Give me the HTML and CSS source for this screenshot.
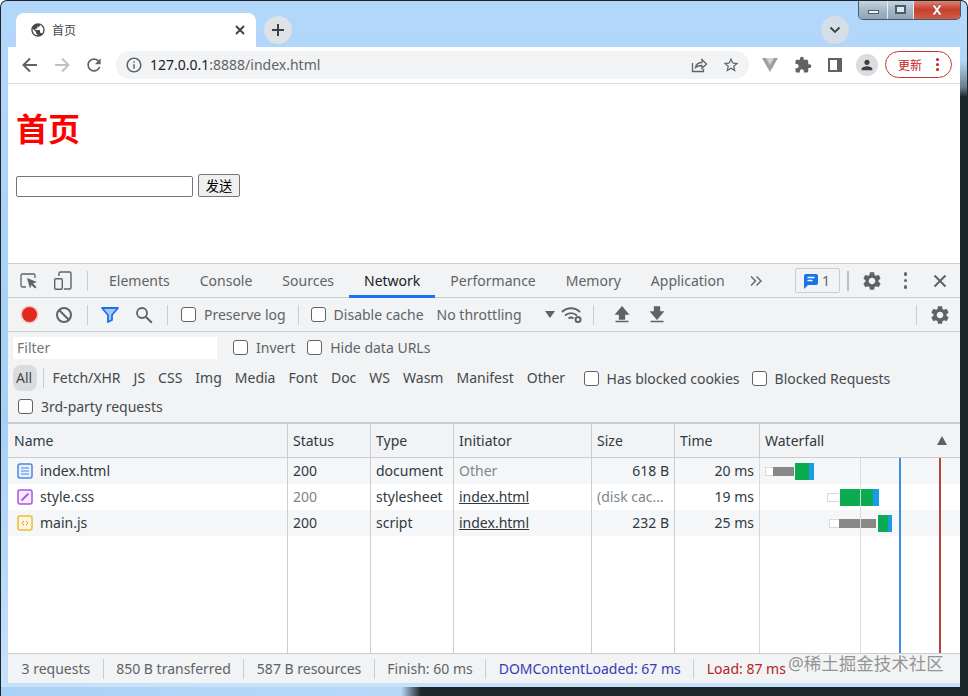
FILE: index.html
```html
<!DOCTYPE html>
<html lang="zh-CN">
<head>
<meta charset="utf-8">
<title>首页</title>
<link rel="stylesheet" href="styles.css">
</head>
<body>
<div class="window">
  <div class="winctl">
    <span class="wc wc-min"><i></i></span>
    <span class="wc wc-max"><i></i></span>
    <span class="wc wc-close"><svg width="18" height="12" viewBox="0 0 18 12"><path d="M4 1h3l2 3 2-3h3l-3.500 5L14 11h-3L9 8l-2 3H4l3.500-5z" fill="#fff" stroke="#8b3a30" stroke-width=".5"/></svg></span>
  </div>
  <header class="tabstrip">
    <div class="tab">
      <svg class="ic16" viewBox="0 0 24 24"><path fill="#45494d" d="M12 2C6.480 2 2 6.480 2 12s4.480 10 10 10 10-4.480 10-10S17.520 2 12 2zm-1 17.930c-3.950-.490-7-3.850-7-7.930 0-.620.080-1.210.210-1.790L9 15v1c0 1.100.900 2 2 2v1.930zm6.900-2.540c-.260-.810-1-1.390-1.900-1.390h-1v-3c0-.550-.450-1-1-1H8v-2h2c.550 0 1-.450 1-1V7h2c1.100 0 2-.900 2-2v-.410c2.930 1.190 5 4.060 5 7.410 0 2.080-.800 3.970-2.100 5.390z"/></svg>
      <span class="tab-title">首页</span>
      <svg class="tab-x" width="10" height="10" viewBox="0 0 10 10"><path d="M1 1l8 8M9 1l-8 8" stroke="#3c4043" stroke-width="1.800" fill="none"/></svg>
    </div>
    <div class="newtab"><svg width="14" height="14" viewBox="0 0 14 14"><path d="M7 1v12M1 7h12" stroke="#3c4043" stroke-width="2" fill="none"/></svg></div>
    <div class="tabsearch"><svg width="12" height="8" viewBox="0 0 12 8"><path d="M1.500 1.500L6 6l4.500-4.500" stroke="#3c4043" stroke-width="1.800" fill="none"/></svg></div>
  </header>
  <main class="content">
    <nav class="toolbar">
      <span class="tbtn"><svg width="18" height="18" viewBox="0 0 18 18"><path d="M16 9H3M9 2.500L2.500 9 9 15.500" stroke="#5f6368" stroke-width="2" fill="none"/></svg></span>
      <span class="tbtn"><svg width="18" height="18" viewBox="0 0 18 18"><path d="M2 9h13M9 2.500L15.500 9 9 15.500" stroke="#bdc1c6" stroke-width="2" fill="none"/></svg></span>
      <span class="tbtn"><svg width="20" height="20" viewBox="0 0 24 24"><path fill="#5f6368" d="M17.650 6.350C16.200 4.900 14.210 4 12 4c-4.420 0-7.990 3.580-7.990 8s3.570 8 7.990 8c3.730 0 6.840-2.550 7.730-6h-2.080c-.820 2.330-3.040 4-5.650 4-3.310 0-6-2.690-6-6s2.690-6 6-6c1.660 0 3.140.690 4.220 1.780L13 11h7V4l-2.350 2.350z"/></svg></span>
      <div class="omnibox">
        <svg class="omni-info" width="18" height="18" viewBox="0 0 24 24"><path fill="#5f6368" d="M11 7h2v2h-2zm0 4h2v6h-2zm1-9C6.480 2 2 6.480 2 12s4.480 10 10 10 10-4.480 10-10S17.520 2 12 2zm0 18c-4.410 0-8-3.590-8-8s3.590-8 8-8 8 3.590 8 8-3.590 8-8 8z"/></svg>
        <span class="url"><b>127.0.0.1</b>:8888/index.html</span>
        <span class="tbtn share"><svg width="18" height="18" viewBox="0 0 18 18"><path d="M2.500 7v8.500h11V13M5.500 11.500c.6-3.200 3-5 6.500-5V3.500l4.500 4.500L12 12.500V9.500c-2.700 0-4.800.5-6.500 2z" stroke="#5f6368" stroke-width="1.300" fill="none"/></svg></span>
        <span class="tbtn"><svg width="18" height="18" viewBox="0 0 24 24"><path fill="#5f6368" d="M22 9.240l-7.190-.620L12 2 9.190 8.630 2 9.240l5.460 4.730L5.820 21 12 17.270 18.180 21l-1.630-7.030L22 9.240zM12 15.400l-3.760 2.270 1-4.280-3.320-2.880 4.380-.380L12 6.100l1.710 4.040 4.380.380-3.320 2.880 1 4.280L12 15.400z"/></svg></span>
      </div>
      <span class="tbtn first-ext"><svg width="16" height="14" viewBox="0 0 16 14"><path d="M0 0h16L8 14z" fill="#9aa0a6"/><path d="M4 0h8L8 7z" fill="#d0d3d6"/></svg></span>
      <span class="tbtn gap1"><svg width="18" height="18" viewBox="0 0 24 24"><path fill="#5f6368" d="M20.500 11H19V7c0-1.100-.900-2-2-2h-4V3.500C13 2.120 11.880 1 10.500 1S8 2.120 8 3.500V5H4c-1.100 0-1.990.900-1.990 2v3.800H3.500c1.490 0 2.700 1.210 2.700 2.700s-1.210 2.700-2.700 2.700H2V20c0 1.100.900 2 2 2h3.800v-1.500c0-1.490 1.210-2.700 2.700-2.700 1.490 0 2.700 1.210 2.700 2.700V22H17c1.100 0 2-.900 2-2v-4h1.500c1.380 0 2.500-1.120 2.500-2.500S21.880 11 20.500 11z"/></svg></span>
      <span class="tbtn"><svg width="14" height="14" viewBox="0 0 14 14"><path d="M0 0h14v14H0z" fill="#5f6368"/><path d="M2 2h7v10H2z" fill="#fff"/></svg></span>
      <span class="tbtn"><span class="avatar"><svg width="16" height="16" viewBox="0 0 24 24"><path fill="#3c4043" d="M12 12c2.210 0 4-1.790 4-4s-1.790-4-4-4-4 1.790-4 4 1.790 4 4 4zm0 2c-2.670 0-8 1.340-8 4v2h16v-2c0-2.660-5.330-4-8-4z"/></svg></span></span>
      <div class="update"><span>更新</span><i class="updots"><em></em><em></em><em></em></i></div>
    </nav>
    <section class="page">
      <h1 class="page-title">首页</h1>
      <form class="page-form"><input class="page-input" type="text"> <button class="page-send" type="button">发送</button></form>
    </section>
    <section class="devtools">
      <div class="dt-tabs">
        <span class="dbtn"><svg width="18" height="18" viewBox="0 0 18 18"><path d="M6 15H2.500A1.500 1.500 0 0 1 1 13.500v-10A1.500 1.500 0 0 1 2.500 2h11A1.500 1.500 0 0 1 15 3.500V6" stroke="#5f6368" stroke-width="1.300" fill="none"/><path d="M7 6l10 4-4 1.500 3.500 3.500-1.500 1.500L11.500 13 10 16.500z" fill="#5f6368"/></svg></span>
        <span class="dbtn"><svg width="20" height="20" viewBox="0 0 20 20"><path d="M6 5V2.500A1.500 1.500 0 0 1 7.500 1h9A1.500 1.500 0 0 1 18 2.500v14a1.500 1.500 0 0 1-1.500 1.500H11" stroke="#5f6368" stroke-width="1.400" fill="none"/><rect x="1.700" y="7.700" width="7.600" height="10.600" rx="1.200" stroke="#5f6368" stroke-width="1.400" fill="none"/></svg></span>
        <i class="vsep vsep-tabs"></i>
        <span class="dtab">Elements</span><span class="dtab">Console</span><span class="dtab">Sources</span><span class="dtab active">Network</span><span class="dtab">Performance</span><span class="dtab">Memory</span><span class="dtab">Application</span>
        <svg class="more" width="14" height="12" viewBox="0 0 14 12"><path d="M2 1.500L6.500 6 2 10.500M7.500 1.500L12 6l-4.500 4.500" stroke="#5f6368" stroke-width="1.400" fill="none"/></svg>
        <span class="badge"><svg width="14" height="16" viewBox="0 0 14 16"><path d="M2 1h10a2 2 0 0 1 2 2v7a2 2 0 0 1-2 2H4l-4 4V3a2 2 0 0 1 2-2z" fill="#1a73e8"/><path d="M3.500 4.500h7M3.500 7.500h5" stroke="#fff" stroke-width="1.300"/></svg>1</span>
        <i class="vsep vsep-badge"></i>
        <span class="dbtn gear"><svg width="22" height="22" viewBox="0 0 24 24"><use href="#gear"/></svg></span>
        <span class="dbtn"><i class="dots"><em></em><em></em><em></em></i></span>
        <span class="dbtn"><svg width="14" height="14" viewBox="0 0 14 14"><path d="M1.500 1.500l11 11M12.500 1.500l-11 11" stroke="#5f6368" stroke-width="2" fill="none"/></svg></span>
      </div>
      <div class="dt-bar">
        <span class="dbtn"><i class="rec"></i></span>
        <span class="dbtn clear"><svg width="18" height="18" viewBox="0 0 18 18"><circle cx="9" cy="9" r="7" stroke="#5f6368" stroke-width="2" fill="none"/><path d="M4 4l10 10" stroke="#5f6368" stroke-width="2"/></svg></span>
        <i class="vsep vsep-rec"></i>
        <span class="dbtn"><svg width="18" height="16" viewBox="0 0 18 16"><path d="M1 1h16l-6 7v5l-4 2V8z" fill="#a8c7fa" stroke="#1a73e8" stroke-width="1.800" stroke-linejoin="round"/></svg></span>
        <span class="dbtn search"><svg width="18" height="18" viewBox="0 0 18 18"><circle cx="7" cy="7" r="5" stroke="#5f6368" stroke-width="1.800" fill="none"/><path d="M10.800 10.800l6 6" stroke="#5f6368" stroke-width="2"/></svg></span>
        <i class="vsep vsep-search"></i>
        <label class="check c-preserve"><input type="checkbox">Preserve log</label>
        <i class="vsep vsep-preserve"></i>
        <label class="check c-cache"><input type="checkbox">Disable cache</label>
        <span class="throttle">No throttling<i class="caret"></i></span>
        <span class="wifi"><svg width="22" height="18" viewBox="0 0 22 18"><path d="M1 6c5-5 13-5 18 0M4 9.500c3.400-3.200 8.600-3.200 12 0M7.500 12.500c1.500-1.200 3.500-1.200 5 0" stroke="#5f6368" stroke-width="1.800" fill="none"/><circle cx="17" cy="13.500" r="2.500" fill="none" stroke="#5f6368" stroke-width="2"/></svg></span>
        <i class="vsep vsep-wifi"></i>
        <span class="dbtn imp"><svg width="16" height="17" viewBox="0 0 16 17"><path d="M8 1l6 7h-3.500v5h-5V8H2zM1.500 15.500h13" fill="#5f6368" stroke="#5f6368" stroke-width="1.300"/></svg></span>
        <span class="dbtn exp"><svg width="16" height="17" viewBox="0 0 16 17"><path d="M8 13L2 6h3.500V1h5v5H14zM1.500 15.500h13" fill="#5f6368" stroke="#5f6368" stroke-width="1.300"/></svg></span>
        <i class="vsep vsep-end"></i>
        <span class="dbtn gear2"><svg width="22" height="22" viewBox="0 0 24 24"><use href="#gear"/></svg></span>
      </div>
      <div class="f-row f-row1">
        <input class="filter" type="text" placeholder="Filter">
        <label class="check c-invert"><input type="checkbox">Invert</label>
        <label class="check c-hide"><input type="checkbox">Hide data URLs</label>
      </div>
      <div class="f-row f-row2">
        <span class="chip on">All</span><i class="vsep vsep-chip"></i>
        <span class="chip">Fetch/XHR</span><span class="chip">JS</span><span class="chip">CSS</span><span class="chip">Img</span><span class="chip">Media</span><span class="chip">Font</span><span class="chip">Doc</span><span class="chip">WS</span><span class="chip">Wasm</span><span class="chip">Manifest</span><span class="chip">Other</span>
        <label class="check c-cookies"><input type="checkbox">Has blocked cookies</label>
        <label class="check c-blocked"><input type="checkbox">Blocked Requests</label>
      </div>
      <div class="f-row f-row3">
        <label class="check c-third"><input type="checkbox">3rd-party requests</label>
      </div>
      <div class="net">
        <div class="th">Name</div><div class="th">Status</div><div class="th">Type</div><div class="th">Initiator</div><div class="th">Size</div><div class="th">Time</div><div class="th th-wf">Waterfall<i class="sort"></i></div>

        <div class="td alt name"><svg class="fi" width="16" height="16" viewBox="0 0 16 16"><rect x="1" y="1" width="14" height="14" rx="2" fill="#e8f0fe" stroke="#4f86e0" stroke-width="1.500"/><path d="M4 5h8M4 8h8M4 11h8" stroke="#4f86e0" stroke-width="1.200"/></svg>index.html</div>
        <div class="td alt">200</div><div class="td alt">document</div><div class="td alt dim">Other</div><div class="td alt num">618 B</div><div class="td alt num">20 ms</div>
        <div class="wf">
          <div class="wf-row alt"><i class="b-wait" style="margin-left:5px;width:8px"></i><i class="b-gray" style="width:21px"></i><i class="b-green" style="margin-left:1px;width:14px"></i><i class="b-blue" style="width:5px"></i></div>
          <div class="wf-row"><i class="b-wait" style="margin-left:67px;width:12px"></i><i class="b-green" style="margin-left:1px;width:33px"></i><i class="b-blue" style="width:6px"></i></div>
          <div class="wf-row alt"><i class="b-wait" style="margin-left:69px;width:10px"></i><i class="b-gray" style="width:37px"></i><i class="b-green" style="margin-left:2px;width:10px"></i><i class="b-blue" style="width:4px"></i></div>
          <i class="wl wl-gray"></i><i class="wl wl-blue"></i><i class="wl wl-red"></i>
        </div>

        <div class="td name"><svg class="fi" width="16" height="16" viewBox="0 0 16 16"><rect x="1" y="1" width="14" height="14" rx="2" fill="#f6edfd" stroke="#a855e8" stroke-width="1.500"/><path d="M4.500 11.500l7-7" stroke="#a855e8" stroke-width="1.800"/></svg>style.css</div>
        <div class="td dim">200</div><div class="td">stylesheet</div><div class="td"><u>index.html</u></div><div class="td dim ell">(disk cache)</div><div class="td num">19 ms</div>

        <div class="td alt name"><svg class="fi" width="16" height="16" viewBox="0 0 16 16"><rect x="1" y="1" width="14" height="14" rx="2" fill="#fff8e1" stroke="#eebb33" stroke-width="1.500"/><path d="M7 6L5 8l2 2M9 6l2 2-2 2" stroke="#e0a000" stroke-width="1" fill="none"/></svg>main.js</div>
        <div class="td alt">200</div><div class="td alt">script</div><div class="td alt"><u>index.html</u></div><div class="td alt num">232 B</div><div class="td alt num">25 ms</div>

        <div class="td fill"></div><div class="td fill"></div><div class="td fill"></div><div class="td fill"></div><div class="td fill"></div><div class="td fill"></div>
      </div>
      <footer class="status">
        <span class="st">3 requests</span><span class="st">850 B transferred</span><span class="st">587 B resources</span><span class="st">Finish: 60 ms</span><span class="st st-blue">DOMContentLoaded: 67 ms</span><span class="st st-red">Load: 87 ms</span>
      </footer>
    </section>
    <div class="watermark">@稀土掘金技术社区</div>
  </main>
</div>
<svg class="defs" width="0" height="0"><defs><path id="gear" fill="#5f6368" d="M19.140 12.940c.040-.300.060-.610.060-.940 0-.320-.020-.640-.070-.940l2.030-1.580c.180-.140.230-.410.120-.610l-1.920-3.320c-.120-.220-.370-.290-.590-.220l-2.390.960c-.500-.380-1.030-.700-1.620-.940l-.360-2.540c-.040-.240-.240-.410-.480-.410h-3.840c-.240 0-.430.170-.470.410l-.360 2.540c-.590.240-1.130.570-1.620.940l-2.390-.960c-.220-.080-.470 0-.590.220L2.740 8.870c-.120.210-.080.470.120.610l2.030 1.580c-.050.300-.090.630-.090.940s.020.640.070.940l-2.030 1.580c-.180.140-.230.410-.120.610l1.920 3.320c.120.220.370.290.590.220l2.390-.960c.500.380 1.030.700 1.620.940l.360 2.540c.050.240.240.410.480.410h3.840c.240 0 .440-.170.470-.410l.360-2.540c.590-.240 1.130-.560 1.620-.940l2.390.960c.220.080.470 0 .590-.220l1.920-3.320c.120-.220.070-.470-.120-.610l-2.010-1.580zM12 15.600c-1.980 0-3.600-1.620-3.600-3.600s1.620-3.600 3.600-3.600 3.600 1.620 3.600 3.600-1.620 3.600-3.600 3.600z"/></defs></svg>
</body>
</html>
```
FILE: styles.css
```css
* { box-sizing: border-box; }
html, body { margin: 0; height: 100%; overflow: hidden; }
body { font-family: "Noto Sans", "Noto Sans CJK SC", sans-serif; font-size: 14px; background: #fff; }
i, em { font-style: normal; display: block; }
.defs { position: absolute; }

.window {
  position: relative; width: 968px; height: 696px;
  display: flex; flex-direction: column; overflow: hidden;
  border: 1px solid #1c2529; border-bottom: 0; border-radius: 7px 7px 0 0;
  background:
    linear-gradient(to right, #a9d2f7 0, #b9d9f8 400px, #1c2529 420px) left bottom / 100% 9px no-repeat,
    linear-gradient(to bottom, #b9dbfa 0, #b3d6f8 60px, #6c7f8c 86px, #1c2529 96px) right top / 7px 100% no-repeat,
    linear-gradient(to bottom, #b3d7fa, #a6d0f6 60%, #c8e2fb);
}
.winctl {
  position: absolute; top: -1px; left: 857px; width: 103px; height: 20px;
  display: flex; border: 1px solid #4a5a66; border-top: 0; border-radius: 0 0 5px 5px; overflow: hidden; z-index: 3;
}
.wc { display: flex; align-items: center; justify-content: center; background: linear-gradient(#c9d7e4, #a6b9c9 50%, #8ea4b5); border-right: 1px solid #e3edf4; }
.wc-min { width: 29px; }
.wc-max { width: 26px; }
.wc-close { flex: 1; border: 0; background: linear-gradient(#dd8c7e, #c7402c 50%, #cf5d46); }
.wc-min i { width: 11px; height: 4px; margin-top: 4px; background: #eef3f7; border: 1px solid #4d5d68; }
.wc-max i { width: 11px; height: 9px; background: #dfe8ee; border: 2px solid #4d5d68; border-top-width: 2px; }

.tabstrip { height: 46px; flex: none; display: flex; align-items: flex-end; padding-left: 15px; position: relative; }
.tab { width: 240px; height: 34px; background: #fff; border-radius: 8px 8px 0 0; display: flex; align-items: center; padding: 0 11px 0 14px; color: #45494d; }
.ic16 { width: 16px; height: 16px; flex: none; }
.tab-title { margin-left: 6px; font-size: 12px; flex: 1; }
.newtab, .tabsearch { width: 28px; height: 28px; border-radius: 50%; background: #dee1e6; display: flex; align-items: center; justify-content: center; margin-bottom: 3px; }
.newtab { margin-left: 8px; }
.tabsearch { margin-left: auto; margin-right: 118px; background: #d5dde6; }

.content { flex: none; width: 952px; height: 636px; margin-left: 7px; display: flex; flex-direction: column; position: relative; }
.toolbar { height: 37px; flex: none; background: #fff; border-bottom: 1px solid #dadce0; display: flex; align-items: center; padding-left: 6px; padding-bottom: 1px; }
.tbtn { width: 32px; height: 28px; flex: none; display: flex; align-items: center; justify-content: center; }
.omnibox { width: 633px; height: 28px; margin-left: 6px; border-radius: 14px; background: #f1f3f4; display: flex; align-items: center; padding: 0 2px 0 9px; }
.omni-info { flex: none; }
.url { margin-left: 7px; flex: 1; color: #5f6368; font-size: 14px; }
.url b { font-weight: 400; color: #202124; }
.first-ext { margin-left: 5px; }
.gap1 { margin-left: 1px; }
.avatar { width: 22px; height: 22px; border-radius: 50%; background: #dadce0; display: flex; align-items: center; justify-content: center; }
.update { width: 67px; height: 27px; margin-left: 2px; border: 1px solid #c5392c; border-radius: 14px; display: flex; align-items: center; padding-left: 12px; color: #c5221f; font-size: 12px; background: #fff; }
.updots { margin-left: 14px; display: flex; flex-direction: column; gap: 2px; }
.updots em { width: 3px; height: 3px; border-radius: 50%; background: #c5221f; }

.page { height: 179px; flex: none; background: #fff; padding: 0 8px; }
.page-title { margin: 21px 0 21px; color: #f00; font-size: 32px; line-height: 48px; font-weight: 700; }
.page-form { display: flex; align-items: flex-end; gap: 5px; height: 23px; }
.page-input { width: 177px; height: 21px; margin: 0; padding: 1px 2px; border: 1px solid #767676; border-radius: 2px; background: #fff; }
.page-send { width: 42px; height: 23px; margin: 0; padding: 0; border: 1px solid #767676; border-radius: 2px; background: #efefef; color: #000; font: 13.300px "Noto Sans CJK SC", sans-serif; }

.devtools { height: 420px; flex: none; display: flex; flex-direction: column; background: #f1f3f4; color: #5f6368; border-top: 1px solid #cbcdd1; }
.dt-tabs { height: 34px; flex: none; display: flex; align-items: center; border-bottom: 1px solid #cbcdd1; padding-left: 5px; padding-right: 2px; }
.dbtn { width: 32px; height: 26px; flex: none; display: flex; align-items: center; justify-content: center; }
.dbtn + .dbtn { margin-left: 2px; }
.vsep { width: 1px; height: 20px; flex: none; background: #cbcdd1; }
.vsep-tabs { margin: 0 6px 0 8px; }
.dtab { height: 33px; padding: 0 15px; line-height: 33px; white-space: nowrap; border-bottom: 2px solid transparent; position: relative; top: 0; }
.dtab.active { color: #202124; border-bottom: 3px solid #1a73e8; margin-bottom: -1px; height: 34px; }
.more { margin-left: 9px; flex: none; }
.badge { margin-left: 32px; width: 45px; height: 25px; border: 1px solid #cbcdd1; border-radius: 2px; display: flex; align-items: center; justify-content: center; gap: 4px; flex: none; font-size: 14px; }
.badge svg { flex: none; }
.vsep-badge { margin: 0 7px; width: 2px; background: #bcc0c4; }
.gear { margin-left: 0; }
.dots, .updots { align-items: center; }
.dots { display: flex; flex-direction: column; gap: 3px; }
.dots em { width: 3.500px; height: 3.500px; border-radius: 50%; background: #5f6368; }

.dt-bar { height: 34px; flex: none; display: flex; align-items: center; border-bottom: 1px solid #cbcdd1; padding-left: 5px; padding-right: 4px; }
.rec { width: 15px; height: 15px; border-radius: 50%; background: #e02a20; box-shadow: 0 0 0 1.500px #f4c4bf; }
.clear { margin-left: 3px !important; }
.vsep-rec { margin: 0 6px 0 7px; }
.search { margin-left: 2px; }
.vsep-search { margin: 0 13px 0 7px; }
.check { display: flex; align-items: center; white-space: nowrap; flex: none; }
.check input { appearance: none; width: 15px; height: 15px; margin: 0 8px 0 0; border: 1px solid #5f6368; border-radius: 3px; background: #fff; flex: none; }
.vsep-preserve { margin: 0 12px; }
.c-cache { width: 126px; }
.throttle { width: 122px; display: flex; align-items: center; position: relative; flex: none; }
.caret { position: absolute; left: 108px; top: 6px; width: 0; height: 0; border-left: 5px solid transparent; border-right: 5px solid transparent; border-top: 7px solid #5f6368; }
.wifi { margin-left: 2px; flex: none; display: flex; }
.vsep-wifi { margin: 0 6px 0 10px; }
.imp { margin-left: 6px; }
.exp { margin-left: 3px !important; }
.vsep-end { margin-left: auto; }
.gear2 { margin-left: 7px; }

.f-row { display: flex; align-items: center; flex: none; }
.f-row1 { height: 31px; padding-left: 5px; }
.f-row2 { height: 30px; padding-left: 5px; color: #45494d; }
.f-row3 { height: 31px; padding-left: 10px; border-bottom: 2px solid #cbcdd1; color: #45494d; padding-bottom: 2px; }
.filter { width: 204px; height: 22px; border: 0; padding: 0 4px; background: #fff; font: inherit; color: #5f6368; }
.filter::placeholder { color: #757575; opacity: 1; }
.c-invert { margin-left: 16px; }
.c-hide { margin-left: 12px; }
.chip { padding: 0 6.500px; height: 26px; line-height: 26px; flex: none; }
.chip.on { background: #dadce0; border-radius: 8px; padding: 0 3px; width: 24px; }
.vsep-chip { margin: 0 2px 0 6px; }
.c-cookies { margin-left: 12px; }
.c-blocked { margin-left: 12px; }

.net { flex: 1; min-height: 0; display: grid; grid-template-columns: 280px 83px 83px 138px 83px 85px 1fr; grid-template-rows: 34px 26px 26px 26px 1fr; background: #fff; color: #303942; }
.th { background: #f1f3f4; border-right: 1px solid #cbcdd1; border-bottom: 1px solid #cbcdd1; padding-left: 5px; line-height: 33px; white-space: nowrap; position: relative; }
.th:first-child { padding-left: 6px; border-left: 0; }
.th-wf { border-right: 0; }
.sort { position: absolute; right: 13px; top: 12px; width: 0; height: 0; border-left: 5.500px solid transparent; border-right: 5.500px solid transparent; border-bottom: 9px solid #5f6368; }
.td { border-right: 1px solid #cbcdd1; padding: 0 5px; line-height: 26px; white-space: nowrap; overflow: hidden; }
.alt { background: #f5f6f7; }
.name { display: flex; align-items: center; padding-left: 9px; }
.fi { margin-right: 7px; flex: none; }
.num { text-align: right; }
.dim { color: #80868b; }
.ell { text-overflow: ellipsis; }
.wf { grid-column: 7; grid-row: 2 / 6; position: relative; border-left: 1px solid #d6d7d9; margin-left: -1px; }
.wf-row { height: 26px; display: flex; align-items: center; }
.b-wait { height: 9px; background: #fff; border: 1px solid #d8d9db; border-right: 0; }
.b-gray { height: 9px; background: #888; }
.b-green { height: 17px; background: #0bac4f; }
.b-blue { height: 17px; background: #1a9be8; }
.wl { position: absolute; top: 0; bottom: 0; width: 1px; }
.wl-gray { left: 100px; background: #dcdde0; }
.wl-blue { left: 139px; width: 2px; background: #3f8ce8; }
.wl-red { left: 179px; background: #b5433c; width: 2px; }

.status { height: 30px; flex: none; display: flex; align-items: center; border-top: 1px solid #cbcdd1; padding-left: 1px; color: #5f6368; }
.st { padding: 0 12.500px; height: 20px; line-height: 20px; border-right: 1px solid #cbcdd1; white-space: nowrap; flex: none; }
.st-blue { color: #3a3ab5; }
.st-red { color: #b3261e; border-right: 0; }
.watermark { position: absolute; left: 780px; bottom: 7px; font-size: 17.500px; line-height: 26px; color: rgba(110,110,110,.72); white-space: nowrap; }
```
